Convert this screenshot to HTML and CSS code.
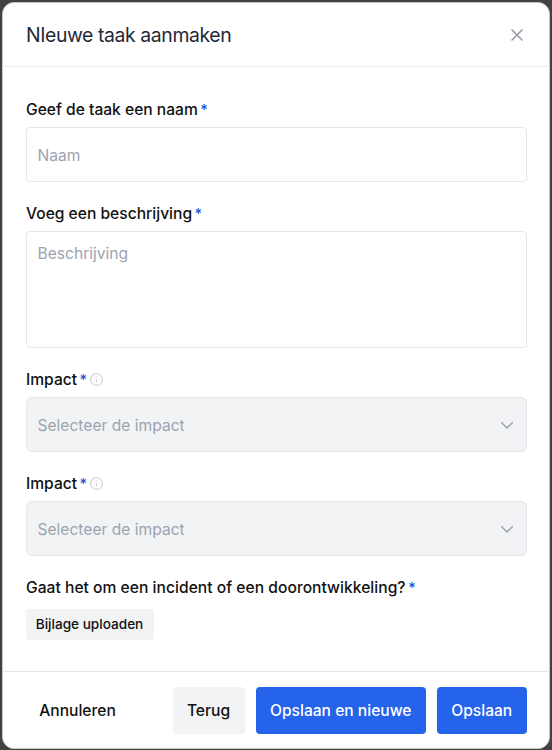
FILE: index.html
```html
<!DOCTYPE html>
<html lang="nl">
<head>
<meta charset="utf-8">
<title>Nieuwe taak</title>
<link rel="stylesheet" href="styles.css">
</head>
<body>
<main class="modal">
  <header class="header">
    <h1 class="title">NIeuwe taak aanmaken</h1>
    <svg class="close" viewBox="0 0 12 12"><path d="M1 1l10 10M11 1L1 11"/></svg>
  </header>
  <form class="form">
    <div class="field">
      <div class="label"><span class="label-text">Geef de taak een naam</span><span class="star">*</span></div>
      <div class="control">Naam</div>
    </div>
    <div class="field">
      <div class="label"><span class="label-text">Voeg een beschrijving</span><span class="star">*</span></div>
      <div class="control area">Beschrijving</div>
    </div>
    <div class="field">
      <div class="label"><span class="label-text">Impact</span><span class="star">*</span><svg class="info" viewBox="0 0 13 13"><circle cx="6.5" cy="6.5" r="5.9"/><path d="M6.500 5.700v3.700M6.500 3.400v1"/></svg></div>
      <div class="control select">Selecteer de impact<svg class="chevron" viewBox="0 0 12 7"><path d="M.7.8L6 6l5.300-5.200"/></svg></div>
    </div>
    <div class="field">
      <div class="label"><span class="label-text">Impact</span><span class="star">*</span><svg class="info" viewBox="0 0 13 13"><circle cx="6.5" cy="6.5" r="5.9"/><path d="M6.500 5.700v3.700M6.500 3.400v1"/></svg></div>
      <div class="control select">Selecteer de impact<svg class="chevron" viewBox="0 0 12 7"><path d="M.7.8L6 6l5.300-5.200"/></svg></div>
    </div>
    <div class="field">
      <div class="label"><span class="label-text question">Gaat het om een incident of een doorontwikkeling?</span><span class="star">*</span></div>
      <button type="button" class="upload">Bijlage uploaden</button>
    </div>
  </form>
  <footer class="footer">
    <button type="button" class="btn cancel">Annuleren</button>
    <button type="button" class="btn back">Terug</button>
    <button type="button" class="btn primary save-new">Opslaan en nieuwe</button>
    <button type="button" class="btn primary save">Opslaan</button>
  </footer>
</main>
</body>
</html>
```
FILE: styles.css
```css
* { box-sizing: border-box; }
body {
  margin: 0;
  height: 750px;
  padding: 2px 2px 1px;
  background: #424242;
  font-family: Inter, sans-serif;
  overflow: hidden;
}
.modal {
  height: 747px;
  display: flex;
  flex-direction: column;
  background: #fff;
  border: 1px solid #c9c9c9;
  border-radius: 12px;
}
.header {
  height: 64px;
  flex: none;
  display: flex;
  align-items: center;
  justify-content: space-between;
  padding: 0 26px 0 23px;
  border-bottom: 1px solid #e9ebef;
}
.title {
  margin: 0;
  font-size: 19.400px;
  font-weight: 400;
  line-height: 28px;
  letter-spacing: -0.4px;
  color: #1f2937;
}
.close { width: 12px; height: 12px; fill: none; stroke: #92989f; stroke-width: 1.500; stroke-linecap: round; }
.form {
  flex: 1;
  padding: 31px 22.500px 0 23px;
}
.field { margin-bottom: 20px; }
.label {
  height: 24px;
  margin-bottom: 5px;
  display: flex;
  align-items: center;
  font-size: 15.600px;
  font-weight: 500;
  line-height: 24px;
  color: #111;
}
.star { margin-left: 2.500px; font-size: 14.500px; line-height: 22px; color: #1d4ed8; }
.question { letter-spacing: 0.03px; }
.info { width: 13px; height: 13px; margin: -2px 0 0 3px; fill: none; stroke: #d1d5db; stroke-width: 1.200; }
.control {
  height: 55px;
  padding: 1px 11px 0 10.500px;
  display: flex;
  align-items: center;
  border: 1px solid #e5e7eb;
  border-radius: 4px;
  font-size: 15.600px;
  line-height: 23px;
  color: #9ca3af;
}
.area { height: 117px; align-items: flex-start; padding-top: 10px; }
.select { justify-content: space-between; background: #f2f3f5; border-radius: 6px; padding-right: 12.500px; }
.chevron { width: 12px; height: 7px; fill: none; stroke: #9ca3af; stroke-width: 1.500; stroke-linecap: round; }
button { font-family: inherit; border: 0; padding: 0; color: #111; font-weight: 500; }
.upload { display: block; width: 128px; height: 31px; margin-top: 9px; padding: 0 1px 1px 0; border-radius: 4px; background: #f2f3f5; font-size: 13.600px; }
.footer {
  height: 77px;
  flex: none;
  display: flex;
  padding: 15px 22.500px 0 23px;
  border-top: 1px solid #e5e7eb;
}
.btn { height: 47px; border-radius: 4px; font-size: 15.600px; }
.cancel { width: 103px; background: none; margin-right: auto; }
.back { width: 72px; background: #f2f3f5; }
.primary { margin-left: 11.500px; background: #2563eb; color: #fff; }
.save-new { width: 169.500px; }
.save { width: 89.500px; }
```
